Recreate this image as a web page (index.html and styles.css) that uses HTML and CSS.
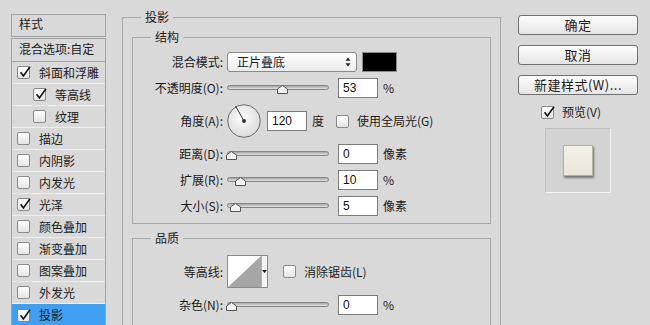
FILE: index.html
```html
<!DOCTYPE html>
<html lang="zh">
<head>
<meta charset="utf-8">
<title>图层样式 - 投影</title>
<link rel="stylesheet" href="styles.css">
</head>
<body>
<div class="app">
  <aside class="styles">
    <div class="hdr">样式</div>
    <ul class="list">
      <li class="blend">混合选项:自定</li>
      <li class="item"><span class="cb"><svg viewBox="0 0 13 13"><path d="M2.6 6.2 L5.4 10 L12 0.8"/></svg></span>斜面和浮雕</li>
      <li class="item sub"><span class="cb"><svg viewBox="0 0 13 13"><path d="M2.6 6.2 L5.4 10 L12 0.8"/></svg></span>等高线</li>
      <li class="item sub"><span class="cb"></span>纹理</li>
      <li class="item"><span class="cb"></span>描边</li>
      <li class="item"><span class="cb"></span>内阴影</li>
      <li class="item"><span class="cb"></span>内发光</li>
      <li class="item"><span class="cb"><svg viewBox="0 0 13 13"><path d="M2.6 6.2 L5.4 10 L12 0.8"/></svg></span>光泽</li>
      <li class="item"><span class="cb"></span>颜色叠加</li>
      <li class="item"><span class="cb"></span>渐变叠加</li>
      <li class="item"><span class="cb"></span>图案叠加</li>
      <li class="item"><span class="cb"></span>外发光</li>
      <li class="item sel"><span class="cb"><svg viewBox="0 0 13 13"><path d="M2.6 6.2 L5.4 10 L12 0.8"/></svg></span>投影</li>
    </ul>
  </aside>

  <main class="main">
    <fieldset class="grp outer">
      <legend>投影</legend>
      <fieldset class="grp inner">
        <legend>结构</legend>
        <div class="rows">
          <div class="row">
            <span class="lbl">混合模式:</span>
            <div class="select">正片叠底<svg class="arr" viewBox="0 0 6 10"><path d="M3 0.5 L5.5 3.8 L0.5 3.8 Z M3 9.5 L5.5 6.2 L0.5 6.2 Z"/></svg></div>
            <div class="swatch"></div>
          </div>
          <div class="row">
            <span class="lbl">不透明度(O):</span>
            <div class="slider"><div class="track"></div><svg class="thumb" style="left:50px" viewBox="0 0 11 9"><path d="M0.5 8.5 V4 L5.5 0.5 L10.5 4 V8.5 Z"/></svg></div>
            <div class="num">53</div><span class="unit">%</span>
          </div>
          <div class="row tall">
            <span class="lbl">角度(A):</span>
            <svg class="dial" viewBox="0 0 34 34">
              <defs><radialGradient id="dg" cx="0.45" cy="0.4" r="0.7"><stop offset="0" stop-color="#ffffff"/><stop offset="1" stop-color="#d4d4d4"/></radialGradient></defs>
              <circle cx="17" cy="17" r="16.3" fill="url(#dg)" stroke="#6a6a6a" stroke-width="1"/>
              <line x1="17" y1="17" x2="8.5" y2="2" stroke="#333" stroke-width="1"/>
              <circle cx="17" cy="17" r="2" fill="#333"/>
            </svg>
            <div class="num">120</div><span class="unit">度</span>
            <span class="cb gl"></span><span class="cbl">使用全局光(G)</span>
          </div>
          <div class="row">
            <span class="lbl">距离(D):</span>
            <div class="slider"><div class="track"></div><svg class="thumb" style="left:-1px" viewBox="0 0 11 9"><path d="M0.5 8.5 V4 L5.5 0.5 L10.5 4 V8.5 Z"/></svg></div>
            <div class="num">0</div><span class="unit">像素</span>
          </div>
          <div class="row">
            <span class="lbl">扩展(R):</span>
            <div class="slider"><div class="track"></div><svg class="thumb" style="left:8px" viewBox="0 0 11 9"><path d="M0.5 8.5 V4 L5.5 0.5 L10.5 4 V8.5 Z"/></svg></div>
            <div class="num">10</div><span class="unit">%</span>
          </div>
          <div class="row">
            <span class="lbl">大小(S):</span>
            <div class="slider"><div class="track"></div><svg class="thumb" style="left:3px" viewBox="0 0 11 9"><path d="M0.5 8.5 V4 L5.5 0.5 L10.5 4 V8.5 Z"/></svg></div>
            <div class="num">5</div><span class="unit">像素</span>
          </div>
        </div>
      </fieldset>

      <fieldset class="grp inner quality">
        <legend>品质</legend>
        <div class="rows q">
          <div class="row contour-row">
            <span class="lbl">等高线:</span>
            <div class="contour">
              <svg class="curve" viewBox="0 0 34 31" preserveAspectRatio="none"><path d="M0 31 L34 0 L34 31 Z"/></svg>
              <div class="dd"><svg viewBox="0 0 5 3"><path d="M0 0 H5 L2.5 3 Z"/></svg></div>
            </div>
            <span class="cb aa"></span><span class="cbl">消除锯齿(L)</span>
          </div>
          <div class="row">
            <span class="lbl">杂色(N):</span>
            <div class="slider"><div class="track"></div><svg class="thumb" style="left:-1px" viewBox="0 0 11 9"><path d="M0.5 8.5 V4 L5.5 0.5 L10.5 4 V8.5 Z"/></svg></div>
            <div class="num">0</div><span class="unit">%</span>
          </div>
        </div>
      </fieldset>
    </fieldset>
  </main>

  <div class="side">
    <div class="btn">确定</div>
    <div class="btn">取消</div>
    <div class="btn">新建样式(W)...</div>
    <div class="pv"><span class="cb"><svg viewBox="0 0 13 13"><path d="M2.6 6.2 L5.4 10 L12 0.8"/></svg></span>预览(V)</div>
    <div class="pbox"><div class="sq"></div></div>
  </div>
</div>
</body>
</html>
```

FILE: styles.css
```css
* { box-sizing: border-box; }

html, body {
  margin: 0;
  width: 650px;
  height: 325px;
  overflow: hidden;
}

body {
  background: #d9d9d9;
  color: #1b1b1b;
  font: 12px/16px "Noto Sans CJK SC", "Liberation Sans", sans-serif;
}

.app {
  display: flex;
  align-items: flex-start;
  padding-left: 11px;
  height: 325px;
  overflow: hidden;
}

/* ---------- left style list ---------- */
.styles {
  width: 95px;
  margin-top: 14px;
  flex: none;
}

.hdr {
  height: 23px;
  border: 1px solid #a3a3a3;
  padding: 0 7px;
  line-height: 18px;
}

.list {
  margin: 1px 0 0;
  padding: 0;
  list-style: none;
  border: 1px solid #a3a3a3;
  border-bottom: none;
}

.blend {
  height: 23px;
  border-bottom: 1px solid #a3a3a3;
  padding-left: 7px;
  line-height: 20px;
}

.item {
  height: 22px;
  border-bottom: 1px solid #ededed;
  display: flex;
  align-items: center;
  gap: 9px;
  padding-left: 5px;
}

.item.sub { padding-left: 21px; }

.item.sel {
  background: #3f9ff2;
  border-bottom: none;
}

/* checkbox */
.cb {
  position: relative;
  flex: none;
  width: 13px;
  height: 13px;
  border: 1px solid #8a8a8a;
  border-radius: 2px;
  background: linear-gradient(#ffffff, #e4e4e4);
}

.cb svg {
  position: absolute;
  left: 0;
  top: -1px;
  width: 13px;
  height: 13px;
  overflow: visible;
}

.cb svg path {
  fill: none;
  stroke: #111;
  stroke-width: 1.6;
}

.cbl { margin-left: 8px; }

/* ---------- main ---------- */
.main {
  margin-left: 16px;
  margin-top: 9px;
  width: 379px;
  height: 316px;
  overflow: hidden;
  flex: none;
}

fieldset.grp {
  margin: 0;
  min-width: 0;
  border: 1px solid #a8a8a8;
}

.grp > legend {
  padding: 0 4px;
  line-height: 16px;
}

.outer {
  padding: 4px 9px 0;
  height: 330px;
}

.outer > legend { margin-left: 9px; }

.inner {
  padding: 7px 0 7px;
}

.inner > legend { margin-left: 18px; }

.quality {
  margin-top: 6px !important;
  padding-top: 9px;
  height: 100px;
}

.rows {
  display: flex;
  flex-direction: column;
  gap: 6px;
}

.rows.q { gap: 7px; }

.row {
  display: flex;
  align-items: center;
  height: 20px;
}

.row.tall { height: 34px; }
.row.contour-row { height: 33px; }

.lbl {
  flex: none;
  width: 90px;
  margin-right: 4px;
  text-align: right;
  white-space: nowrap;
}

.select {
  position: relative;
  width: 130px;
  height: 20px;
  border: 1px solid #8a8a8a;
  border-radius: 3px;
  background: linear-gradient(#ffffff, #ebebeb);
  padding-left: 9px;
  line-height: 18px;
}

.select .arr {
  position: absolute;
  right: 5px;
  top: 4px;
  width: 6px;
  height: 10px;
}

.select .arr path { fill: #222; }

.swatch {
  width: 35px;
  height: 20px;
  margin-left: 5px;
  background: #000;
  border: 1px solid #8c8c8c;
}

.slider {
  position: relative;
  flex: none;
  width: 102px;
  height: 20px;
}

.track {
  position: absolute;
  left: 0;
  right: 0;
  top: 7px;
  height: 5px;
  border: 1px solid #858585;
  border-radius: 3px;
  background: linear-gradient(#a6a6a6, #e2e2e2);
}

.thumb {
  position: absolute;
  top: 7px;
  width: 11px;
  height: 9px;
}

.thumb path {
  fill: #f1f1f1;
  stroke: #555;
  stroke-width: 1;
}

.num {
  flex: none;
  width: 40px;
  height: 20px;
  margin-left: 9px;
  border: 1px solid #7c7c7c;
  background: #fff;
  padding-left: 4px;
  font: 12px/18px "Liberation Sans", "DejaVu Sans", sans-serif;
  color: #111;
}

.unit { margin-left: 5px; }

.dial {
  flex: none;
  width: 34px;
  height: 34px;
}

.row.tall .num { margin-left: 6px; }
.cb.gl { margin-left: 12px; }

.contour {
  flex: none;
  display: flex;
  width: 41px;
  height: 33px;
  border: 1px solid #8a8a8a;
  background: #fff;
}

.curve {
  width: 34px;
  height: 31px;
  display: block;
}

.curve path { fill: #a6a6a6; }

.dd {
  flex: 1;
  border-left: 1px solid #b0b0b0;
  background: #f4f4f4;
  display: flex;
  align-items: center;
  justify-content: center;
}

.dd svg {
  width: 5px;
  height: 3px;
}

.dd svg path { fill: #111; }

.cb.aa { margin-left: 15px; }

/* ---------- right column ---------- */
.side {
  margin-left: 17px;
  margin-top: 15px;
  width: 120px;
  flex: none;
  display: flex;
  flex-direction: column;
}

.btn {
  height: 20px;
  margin-bottom: 10px;
  border: 1px solid #6f6f6f;
  border-radius: 3px;
  background: linear-gradient(#fdfdfd, #e5e5e5);
  text-align: center;
  font-size: 13px;
  line-height: 18px;
  letter-spacing: 0.5px;
}

.pv {
  display: flex;
  align-items: center;
  gap: 8px;
  height: 16px;
  margin-top: -1px;
  padding-left: 23px;
  font-size: 12px;
}

.pbox {
  width: 66px;
  height: 65px;
  margin: 8px 0 0 27px;
  background: #d3d3d3;
  border: 1px solid;
  border-color: #c2c2c2 #f3f3f3 #f3f3f3 #c2c2c2;
  display: flex;
  align-items: center;
  justify-content: center;
}

.sq {
  width: 30px;
  height: 31px;
  background: linear-gradient(#f4f0e7, #ebe6da);
  border: 1px solid #b4afa4;
  box-shadow: 1px 2px 2px rgba(0, 0, 0, 0.45);
}
```
